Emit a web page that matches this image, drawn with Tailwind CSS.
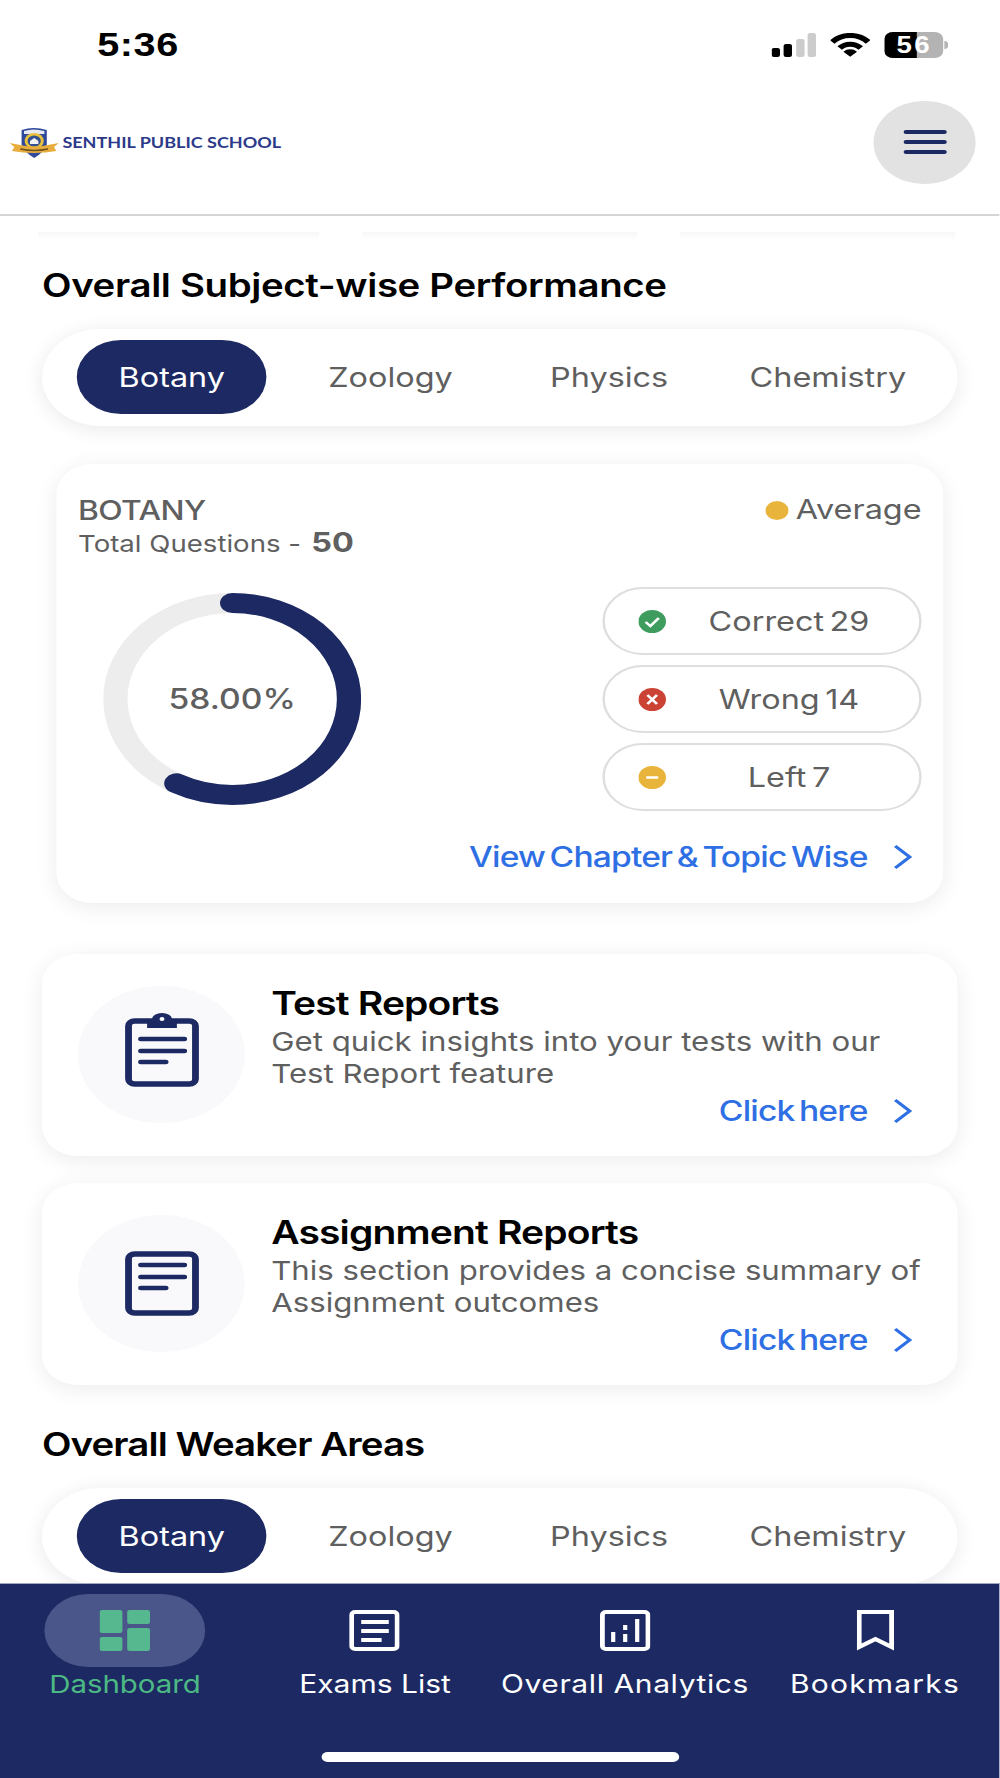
<!DOCTYPE html>
<html lang="en">
<head>
    <meta charset="UTF-8">
    <meta name="viewport" content="width=device-width, initial-scale=1.0">
    <title>Dashboard</title>
    <script src="https://cdn.jsdelivr.net/npm/@tailwindcss/browser@4"></script>
</head>
<body class="bg-white overflow-hidden w-[1000px] h-[1778px]">

<div class="w-[833.33px] h-[1778px] origin-top-left scale-x-[1.2] flex flex-col overflow-hidden font-['Inter',sans-serif]">

    <!-- Status bar -->
    <div class="h-[70px] pt-[20px] pl-[81px] pr-[43px] flex items-center justify-between shrink-0">
        <span class="font-['Liberation_Sans',sans-serif] font-bold text-[33px] text-black tracking-[0.5px]">5:36</span>
        <div class="flex items-center">
            <svg width="37" height="24" viewBox="0 0 37 24">
                <rect x="0" y="15" width="7" height="9" rx="2" fill="#000"/>
                <rect x="10" y="11" width="7" height="13" rx="2" fill="#000"/>
                <rect x="20.5" y="6" width="7" height="18" rx="2" fill="#ccc"/>
                <rect x="30" y="0" width="7" height="24" rx="2" fill="#ccc"/>
            </svg>
            <svg class="ml-[12px]" width="33" height="24" viewBox="0 0 32 23" fill="none">
                <path d="M1.5 8.5A20 20 0 0 1 30.5 8.5" stroke="#000" stroke-width="5"/>
                <path d="M7.5 14.5A11.5 11.5 0 0 1 24.5 14.5" stroke="#000" stroke-width="5"/>
                <path d="M16 23L10.5 18A7.5 7.5 0 0 1 21.5 18Z" fill="#000"/>
            </svg>
            <div class="ml-[12px] relative w-[49px] h-[26px] rounded-[7px] overflow-hidden bg-[#b3b3b3] flex items-center justify-center">
                <div class="absolute left-0 top-0 bottom-0 w-[27px] bg-black"></div>
                <span class="relative font-['Liberation_Sans',sans-serif] font-bold text-[23px] tracking-[2px] text-white leading-none">56</span>
            </div>
            <div class="ml-[1px] w-[3px] h-[8px] rounded-r bg-[#b3b3b3]"></div>
        </div>
    </div>

    <!-- Header -->
    <header class="h-[146px] shrink-0 border-b-2 border-[#d6d6d6] pl-[8px] pr-[20px] flex items-center justify-between">
        <div class="flex items-center gap-[3px]">
            <svg width="41" height="31" viewBox="0 0 41 31">
                <path d="M10 3Q20 -1 31 3V18Q28 26 20.5 31Q13 26 10 18Z" fill="#2f4a9a"/>
                <path d="M12 4Q20 1 29 4V7H12Z" fill="#e6e8f2"/>
                <circle cx="20.5" cy="14" r="8" fill="#e9c23c"/>
                <circle cx="20.5" cy="14" r="5.5" fill="#33508f"/>
                <path d="M17 17h7v-3l-3.5-3-3.5 3Z" fill="#f3f3f3"/>
                <path d="M0 16L9 18Q20 21 32 18L41 16L37 20L39 24Q20 28 2 24L4 20Z" fill="#e8ad3c"/>
                <path d="M9 22Q20 25 32 22" stroke="#6b5320" stroke-width="1.5" fill="none"/>
            </svg>
            <span class="font-['Lato',sans-serif] font-bold text-[15px] text-[#2c3a8a] whitespace-nowrap">SENTHIL PUBLIC SCHOOL</span>
        </div>
        <button class="w-[85px] h-[83px] rounded-full bg-[#e2e2e2] flex flex-col items-center justify-center gap-[6px]">
            <span class="block w-[36px] h-[4px] rounded-full bg-[#1c2962]"></span>
            <span class="block w-[36px] h-[4px] rounded-full bg-[#1c2962]"></span>
            <span class="block w-[36px] h-[4px] rounded-full bg-[#1c2962]"></span>
        </button>
    </header>

    <!-- Scroll area -->
    <main class="flex-1 min-h-0 overflow-hidden">
        <!-- faint shadow left over from content scrolled under the header -->
        <div class="mt-[16px] ml-[32px] h-[8px] flex gap-[36px]">
            <div class="w-[234px] bg-gradient-to-b from-[#f7f7f7] to-white"></div>
            <div class="w-[229px] bg-gradient-to-b from-[#f7f7f7] to-white"></div>
            <div class="w-[229px] bg-gradient-to-b from-[#f7f7f7] to-white"></div>
        </div>

        <h2 class="mt-[25px] ml-[35px] h-[40px] leading-[42px] text-[32px] font-semibold text-black tracking-[-0.3px] whitespace-nowrap">Overall Subject-wise Performance</h2>

        <div class="mt-[24px] ml-[35px] w-[763px] h-[97px] px-[17px] pt-[11px] rounded-full bg-white shadow-[0_3px_18px_rgba(0,0,0,0.09)] grid grid-cols-4 items-start text-[27px] text-[#5f5f5f] text-center">
            <div class="justify-self-center w-[158px] h-[74px] rounded-full bg-[#1c2962] text-white leading-[76px]">Botany</div>
            <div class="leading-[76px]">Zoology</div>
            <div class="leading-[76px]">Physics</div>
            <div class="leading-[76px]">Chemistry</div>
        </div>

        <!-- Subject card -->
        <section class="mt-[38px] ml-[47px] w-[739px] h-[439px] pt-[28px] pl-[18px] pr-[18px] rounded-[30px] bg-white shadow-[0_4px_20px_rgba(0,0,0,0.08)] text-[#5f5f5f]">
            <div class="flex justify-between items-start">
                <div>
                    <div class="h-[36px] leading-[36px] text-[26.5px] font-medium tracking-[-0.5px]">BOTANY</div>
                    <div class="h-[30px] leading-[30px] text-[23px] whitespace-nowrap">Total Questions - <span class="ml-[2px] text-[27px] font-bold">50</span></div>
                </div>
                <div class="h-[36px] flex items-center gap-[6px] text-[27px]">
                    <span class="w-[19px] h-[19px] rounded-full bg-[#e9b43b]"></span>
                    <span>Average</span>
                </div>
            </div>

            <div class="mt-[29px] h-[224px] flex items-center justify-between">
                <div class="relative ml-[21px] w-[215px] h-[212px]">
                    <svg class="w-[215px] h-[212px]" viewBox="0 0 212 212" preserveAspectRatio="none" fill="none">
                        <circle cx="106" cy="106" r="96" stroke="#ededed" stroke-width="20"/>
                        <circle cx="106" cy="106" r="96" stroke="#1c2962" stroke-width="20" stroke-linecap="round" pathLength="100" stroke-dasharray="58 100" transform="rotate(-90 106 106)"/>
                    </svg>
                    <div class="absolute inset-0 flex items-center justify-center text-[28px] font-medium">58.00%</div>
                </div>

                <div class="w-[266px] flex flex-col gap-[10px] text-[27px] [word-spacing:-3px]">
                    <div class="h-[68px] border-2 border-[#dedede] rounded-full pl-[28px] pr-[6px] flex items-center">
                        <svg width="23" height="23" viewBox="0 0 23 23" fill="none"><circle cx="11.5" cy="11.5" r="11.5" fill="#3f9c5f"/><path d="M6 12l4 4 7-8" stroke="#fff" stroke-width="2.4"/></svg>
                        <span class="flex-1 text-center pt-[2px]">Correct 29</span>
                    </div>
                    <div class="h-[68px] border-2 border-[#dedede] rounded-full pl-[28px] pr-[6px] flex items-center">
                        <svg width="23" height="23" viewBox="0 0 23 23" fill="none"><circle cx="11.5" cy="11.5" r="11.5" fill="#cb4335"/><path d="M7.5 7l8 9M15.5 7l-8 9" stroke="#fff" stroke-width="2.4"/></svg>
                        <span class="flex-1 text-center pt-[2px]">Wrong 14</span>
                    </div>
                    <div class="h-[68px] border-2 border-[#dedede] rounded-full pl-[28px] pr-[6px] flex items-center">
                        <svg width="23" height="23" viewBox="0 0 23 23" fill="none"><circle cx="11.5" cy="11.5" r="11.5" fill="#e9b43b"/><path d="M6.5 11.5h10" stroke="#fff" stroke-width="2.6"/></svg>
                        <span class="flex-1 text-center pt-[2px]">Left 7</span>
                    </div>
                </div>
            </div>

            <div class="mt-[28px] pr-[7px] h-[36px] flex items-center justify-end gap-[21px] text-[#2f6fe4] text-[28px] font-medium tracking-[-0.7px] [word-spacing:-3px]">
                <span>View Chapter &amp; Topic Wise</span>
                <svg width="17" height="26" viewBox="0 0 17 26" fill="none"><path d="M2 2l12 11L2 24" stroke="#2f6fe4" stroke-width="3"/></svg>
            </div>
        </section>

        <!-- Test reports -->
        <section class="mt-[51px] ml-[35px] w-[763px] h-[202px] pt-[32px] pl-[30px] pr-[30px] rounded-[30px] bg-white shadow-[0_4px_20px_rgba(0,0,0,0.08)] flex gap-[22px]">
            <div class="w-[139px] h-[137px] rounded-full bg-[#f9f9fc] flex items-center justify-center shrink-0">
                <svg class="mb-[9px] w-[62px] h-[74px]" viewBox="0 0 60 74" preserveAspectRatio="none" fill="none">
                    <rect x="3" y="8" width="54" height="63" rx="5" stroke="#1c2962" stroke-width="5.5"/>
                    <path d="M18 15V9Q18 7 22 6A8 6 0 0 1 38 6Q42 7 42 9V15Z" fill="#1c2962"/>
                    <circle cx="30" cy="6" r="2" fill="#fff"/>
                    <path d="M13 26h35M13 38h35M13 49h20" stroke="#1c2962" stroke-width="4.5" stroke-linecap="round"/>
                </svg>
            </div>
            <div class="flex-1 min-w-0">
                <h3 class="h-[36px] leading-[36px] text-[32.5px] font-semibold text-black tracking-[-0.7px]">Test Reports</h3>
                <p class="mt-[4px] text-[26px] leading-[32px] text-[#5f5f5f] max-w-[545px]">Get quick insights into your tests with our Test Report feature</p>
                <div class="mt-[3px] pr-[7px] h-[36px] flex items-center justify-end gap-[21px] text-[#2f6fe4] text-[28px] font-medium tracking-[-0.7px] [word-spacing:-3px]">
                    <span>Click here</span>
                    <svg width="17" height="26" viewBox="0 0 17 26" fill="none"><path d="M2 2l12 11L2 24" stroke="#2f6fe4" stroke-width="3"/></svg>
                </div>
            </div>
        </section>

        <!-- Assignment reports -->
        <section class="mt-[27px] ml-[35px] w-[763px] h-[202px] pt-[32px] pl-[30px] pr-[30px] rounded-[30px] bg-white shadow-[0_4px_20px_rgba(0,0,0,0.08)] flex gap-[22px]">
            <div class="w-[139px] h-[137px] rounded-full bg-[#f9f9fc] flex items-center justify-center shrink-0">
                <svg class="w-[62px] h-[65px]" viewBox="0 0 60 65" preserveAspectRatio="none" fill="none">
                    <rect x="3" y="3" width="54" height="59" rx="5" stroke="#1c2962" stroke-width="5.5"/>
                    <path d="M13 14h35M13 26h35M13 37h20" stroke="#1c2962" stroke-width="4.5" stroke-linecap="round"/>
                </svg>
            </div>
            <div class="flex-1 min-w-0">
                <h3 class="h-[36px] leading-[36px] text-[32.5px] font-semibold text-black tracking-[-0.7px]">Assignment Reports</h3>
                <p class="mt-[4px] text-[26px] leading-[32px] text-[#5f5f5f] max-w-[545px]">This section provides a concise summary of Assignment outcomes</p>
                <div class="mt-[3px] pr-[7px] h-[36px] flex items-center justify-end gap-[21px] text-[#2f6fe4] text-[28px] font-medium tracking-[-0.7px] [word-spacing:-3px]">
                    <span>Click here</span>
                    <svg width="17" height="26" viewBox="0 0 17 26" fill="none"><path d="M2 2l12 11L2 24" stroke="#2f6fe4" stroke-width="3"/></svg>
                </div>
            </div>
        </section>

        <h2 class="mt-[39px] ml-[35px] h-[40px] leading-[42px] text-[32px] font-semibold text-black tracking-[-0.75px] whitespace-nowrap">Overall Weaker Areas</h2>

        <div class="mt-[24px] ml-[35px] w-[763px] h-[97px] px-[17px] pt-[11px] rounded-full bg-white shadow-[0_3px_18px_rgba(0,0,0,0.09)] grid grid-cols-4 items-start text-[27px] text-[#5f5f5f] text-center">
            <div class="justify-self-center w-[158px] h-[74px] rounded-full bg-[#1c2962] text-white leading-[76px]">Botany</div>
            <div class="leading-[76px]">Zoology</div>
            <div class="leading-[76px]">Physics</div>
            <div class="leading-[76px]">Chemistry</div>
        </div>
    </main>

    <!-- Bottom nav -->
    <nav class="h-[195px] shrink-0 bg-[#1c2962] border-t border-[#a4a9c2] pt-[10px]">
        <div class="grid grid-cols-4 text-center text-white text-[25px] whitespace-nowrap">
            <div class="flex flex-col items-center">
                <div class="w-[134px] h-[73px] rounded-full bg-[#4a5689] flex items-center justify-center">
                    <svg width="42" height="41" viewBox="0 0 42 41" fill="#55b88e">
                        <rect x="0" y="0" width="19" height="23" rx="2"/>
                        <rect x="0" y="27" width="19" height="14" rx="2"/>
                        <rect x="23" y="0" width="19" height="14" rx="2"/>
                        <rect x="23" y="18" width="19" height="23" rx="2"/>
                    </svg>
                </div>
                <span class="h-[36px] leading-[34px] text-[#4cb985] text-[24.5px]">Dashboard</span>
            </div>
            <div class="flex flex-col items-center">
                <div class="h-[73px] flex items-center justify-center">
                    <svg width="42" height="41" viewBox="0 0 42 41" fill="none">
                        <rect x="2" y="2" width="38" height="37" rx="3" stroke="#fff" stroke-width="4"/>
                        <path d="M10 12h23M10 21h23M10 30h17" stroke="#fff" stroke-width="4"/>
                    </svg>
                </div>
                <span class="h-[36px] leading-[34px]">Exams List</span>
            </div>
            <div class="flex flex-col items-center">
                <div class="h-[73px] flex items-center justify-center">
                    <svg width="42" height="41" viewBox="0 0 42 41" fill="none">
                        <rect x="2" y="2" width="38" height="37" rx="3" stroke="#fff" stroke-width="4"/>
                        <path d="M11 22v10M21 24v8M21 15v5M31 9v23" stroke="#fff" stroke-width="3.5"/>
                    </svg>
                </div>
                <span class="h-[36px] leading-[34px] tracking-[0.5px]">Overall Analytics</span>
            </div>
            <div class="flex flex-col items-center">
                <div class="h-[73px] flex items-center justify-center">
                    <svg width="31" height="41" viewBox="0 0 31 41" fill="none">
                        <path d="M2 2h27v35l-13.5-8L2 37Z" stroke="#fff" stroke-width="4"/>
                    </svg>
                </div>
                <span class="h-[36px] leading-[34px] tracking-[1px]">Bookmarks</span>
            </div>
        </div>
        <div class="mt-[49px] mx-auto w-[298px] h-[10px] rounded-full bg-white"></div>
    </nav>
</div>

</body>
</html>
